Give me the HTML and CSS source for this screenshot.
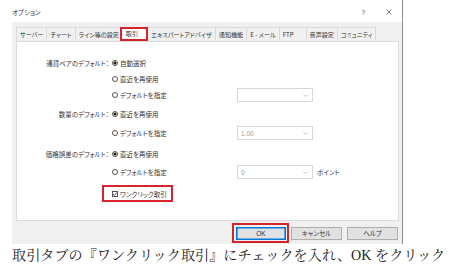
FILE: index.html
```html
<!DOCTYPE html>
<html lang="ja">
<head>
<meta charset="utf-8">
<link rel="stylesheet" href="styles.css">
</head>
<body>
<div class="window">
  <div class="titlebar">
    <span class="title">オプション</span>
    <span class="tb-help">?</span>
    <svg class="tb-close" width="6" height="6" viewBox="0 0 6 6"><path d="M0.5 0.5L5.5 5.5M5.5 0.5L0.5 5.5" stroke="#444" stroke-width="0.7" fill="none"/></svg>
  </div>
  <div class="body">
    <div class="tabs">
      <span class="tab">サーバー</span>
      <span class="tab">チャート</span>
      <span class="tab">ライン等の設定</span>
      <span class="tab active">取引</span>
      <span class="tab">エキスパートアドバイザ</span>
      <span class="tab">通知機能</span>
      <span class="tab">E - メール</span>
      <span class="tab tab-ftp">FTP</span>
      <span class="tab">音声設定</span>
      <span class="tab">コミュニティ</span>
    </div>
    <div class="panel">
      <div class="row r1"><span class="label">通貨ペアのデフォルト：</span><span class="opt"><i class="radio on"></i>自動選択</span></div>
      <div class="row r2"><span class="label"></span><span class="opt"><i class="radio"></i>直近を再使用</span></div>
      <div class="row r3"><span class="label"></span><span class="opt"><i class="radio"></i>デフォルトを指定</span><span class="select"><span class="val"></span><svg class="chev" width="5" height="3" viewBox="0 0 5 3"><path d="M0.5 0.5L2.5 2.5L4.5 0.5" stroke="#aaa" stroke-width="0.7" fill="none"/></svg></span></div>
      <div class="row r4"><span class="label">数量のデフォルト：</span><span class="opt"><i class="radio on"></i>直近を再使用</span></div>
      <div class="row r5"><span class="label"></span><span class="opt"><i class="radio"></i>デフォルトを指定</span><span class="select"><span class="val">1.00</span><svg class="chev" width="5" height="3" viewBox="0 0 5 3"><path d="M0.5 0.5L2.5 2.5L4.5 0.5" stroke="#aaa" stroke-width="0.7" fill="none"/></svg></span></div>
      <div class="row r6"><span class="label">価格誤差のデフォルト：</span><span class="opt"><i class="radio on"></i>直近を再使用</span></div>
      <div class="row r7"><span class="label"></span><span class="opt"><i class="radio"></i>デフォルトを指定</span><span class="select"><span class="val">0</span><svg class="chev" width="5" height="3" viewBox="0 0 5 3"><path d="M0.5 0.5L2.5 2.5L4.5 0.5" stroke="#aaa" stroke-width="0.7" fill="none"/></svg></span><span class="unit">ポイント</span></div>
      <div class="check-row"><i class="checkbox"><svg width="6" height="6" viewBox="0 0 6 6"><path d="M1 3L2.4 4.4L5 1.4" stroke="#333" stroke-width="0.8" fill="none"/></svg></i>ワンクリック取引</div>
    </div>
    <div class="buttons">
      <span class="ok-mark"><span class="btn ok">OK</span></span>
      <span class="btn cancel">キャンセル</span>
      <span class="btn help">ヘルプ</span>
    </div>
  </div>
</div>
<p class="caption">取引タブの『ワンクリック取引』にチェックを入れ、OK をクリック</p>
</body>
</html>
```

FILE: styles.css
```css
html, body {
  margin: 0;
  padding: 0;
}
body {
  width: 451px;
  height: 269px;
  overflow: hidden;
  background: #fff;
  font-family: "Noto Sans CJK JP", "Noto Sans", sans-serif;
  color: #333;
}
.window {
  width: 402px;
  height: 244px;
  border-right: 1px solid #8c8c8c;
  display: flex;
  flex-direction: column;
}
.titlebar {
  height: 22px;
  box-sizing: border-box;
  padding: 2px 10px 0 12px;
  display: flex;
  align-items: center;
  font-size: 6.5px;
  font-feature-settings: "palt";
}
.tb-help {
  margin-left: auto;
  margin-right: 21px;
  font-family: "Liberation Sans", sans-serif;
  font-size: 6.5px;
  color: #555;
}
.body {
  flex: 1;
  margin-left: 12px;
  background: #f0f0f0;
  padding: 5px 3px 0 4px;
  display: flex;
  flex-direction: column;
}
.tabs {
  display: flex;
  height: 14px;
}
.tab {
  font-size: 6.1px;
  font-feature-settings: "palt";
  line-height: 13px;
  padding: 0 3px;
  border: 1px solid #dadada;
  border-bottom: none;
  margin-right: -1px;
  white-space: nowrap;
  color: #333;
}
.tab.active {
  border: 2px solid #d8232a;
  background: #fff;
  line-height: 10px;
  padding: 0 8px 0 4px;
  margin-left: -2px;
  position: relative;
  z-index: 1;
}
.tab-ftp {
  padding-right: 12px;
}
.panel {
  height: 180px;
  box-sizing: border-box;
  background: #fff;
  border: 1px solid #dcdcdc;
  display: flex;
  flex-direction: column;
}
.row {
  display: flex;
  align-items: center;
  height: 14px;
  font-size: 6.5px;
  font-feature-settings: "palt";
  white-space: nowrap;
}
.r1 { margin-top: 14px; }
.r2 { margin-top: 2px; }
.r3 { margin-top: 2px; }
.r4 { margin-top: 5px; }
.r5 { margin-top: 5px; }
.r6 { margin-top: 7px; }
.r7 { margin-top: 4px; }
.label {
  width: 92px;
  text-align: right;
}
.opt {
  width: 125px;
  margin-left: 3px;
  display: flex;
  align-items: center;
}
.radio {
  width: 6px;
  height: 6px;
  box-sizing: border-box;
  border: 0.8px solid #555;
  border-radius: 50%;
  margin-right: 2px;
  flex: none;
}
.radio.on {
  background: radial-gradient(circle, #222 0, #222 1.4px, #fff 1.7px);
}
.select {
  width: 76px;
  height: 14px;
  box-sizing: border-box;
  border: 1px solid #d6d6d6;
  background: #fff;
  display: flex;
  align-items: center;
  padding: 0 4px 0 3px;
  color: #999;
  font-family: "Liberation Sans", "Noto Sans CJK JP", sans-serif;
}
.chev {
  margin-left: auto;
}
.unit {
  margin-left: 4px;
}
.check-row {
  margin-top: 6px;
  margin-left: 85px;
  width: 71px;
  height: 17px;
  box-sizing: border-box;
  border: 2px solid #d8232a;
  padding-left: 8px;
  display: flex;
  align-items: center;
  font-size: 6.5px;
  font-feature-settings: "palt";
  white-space: nowrap;
}
.checkbox {
  width: 6px;
  height: 6px;
  box-sizing: border-box;
  border: 0.8px solid #555;
  margin-right: 2px;
  display: flex;
  align-items: center;
  justify-content: center;
}
.checkbox svg {
  flex: none;
}
.buttons {
  flex: 1;
  display: flex;
  justify-content: flex-end;
  align-items: center;
  padding-top: 1px;
  margin-right: 1px;
}
.btn {
  width: 51px;
  height: 13px;
  box-sizing: border-box;
  border: 1px solid #adadad;
  background: #e1e1e1;
  font-size: 6.5px;
  font-feature-settings: "palt";
  display: flex;
  align-items: center;
  justify-content: center;
  color: #333;
}
.ok-mark {
  display: flex;
  border: 2px solid #d8232a;
  padding: 2px 1px 1px 2px;
}
.btn.ok {
  width: 50px;
  border: 1px solid #0078d7;
  box-shadow: inset 0 0 0 0.6px #0078d7;
  font-family: "Liberation Sans", sans-serif;
}
.btn.cancel {
  margin-left: 2px;
}
.btn.help {
  margin-left: 5px;
}
.caption {
  margin: 2px 0 0 0;
  padding-left: 12px;
  font-family: "Liberation Serif", "Noto Serif CJK JP", "Noto Sans CJK JP", serif;
  font-size: 14.1px;
  letter-spacing: 0.05px;
  line-height: 18px;
  color: #222;
  white-space: nowrap;
}
```
